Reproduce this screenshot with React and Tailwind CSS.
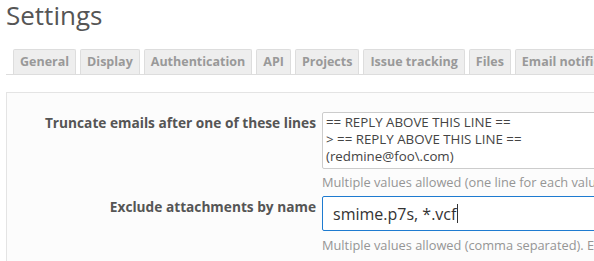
export default function App() {
  const tabs = ['General', 'Display', 'Authentication', 'API', 'Projects', 'Issue tracking', 'Files', 'Email notifications', 'Incoming emails']

  return (
    <div className="w-[594px] h-[261px] overflow-hidden bg-white pl-[6px] font-['Open_Sans',sans-serif] text-[#333]">
      <h2 className="text-[26px] leading-[28px] pt-[1px] text-[#555] font-normal">Settings</h2>

      <div className="mt-[20px] flex gap-[4px] pl-[7px] border-b border-[#ddd] whitespace-nowrap w-[700px]">
        {tabs.map((t) => (
          <div
            key={t}
            className="h-[25px] px-[6px] flex items-center bg-[#eee] border border-b-0 border-[#ddd] rounded-t-[2px] text-[12.5px] font-bold text-[#999]"
          >
            {t}
          </div>
        ))}
      </div>

      <div className="mt-[17px] w-[700px] bg-[#fcfcfc] border border-[#e4e4e4] pt-[19px] pb-[30px]">
        <div className="flex">
          <div className="w-[315px] shrink-0 text-right pr-[6px] pt-[1px] text-[13.7px] font-bold text-[#555]">
            Truncate emails after one of these lines
          </div>
          <div>
            <div className="w-[300px] h-[57px] overflow-hidden border border-[#ccc] bg-white rounded-[2px] px-[3px] pt-[1px] text-[13.3px] leading-[17px] text-[#444]">
              <div>== REPLY ABOVE THIS LINE ==</div>
              <div>&gt; == REPLY ABOVE THIS LINE ==</div>
              <div>(redmine@foo\.com)</div>
              <div>(redmine@bar\.com)</div>
            </div>
            <div className="mt-[5px] text-[12.8px] leading-[16px] text-[#959595] whitespace-nowrap">
              Multiple values allowed (one line for each value).
            </div>
          </div>
        </div>

        <div className="flex mt-[6px]">
          <div className="w-[315px] shrink-0 text-right pr-[6px] pt-[1px] text-[13.7px] font-bold text-[#555]">
            Exclude attachments by name
          </div>
          <div>
            <div className="w-[300px] h-[35px] flex items-center border border-[#1e7bd0] bg-white rounded-[2px] pl-[10px] text-[16px] text-[#333]">
              smime.p7s, *.vcf<span className="inline-block w-px h-[19px] bg-[#333] ml-[1px]"></span>
            </div>
            <div className="mt-[6px] text-[12.8px] leading-[16px] text-[#959595] whitespace-nowrap">
              Multiple values allowed (comma separated). Example: smime.p7s, *.vcf
            </div>
          </div>
        </div>
      </div>
    </div>
  )
}
